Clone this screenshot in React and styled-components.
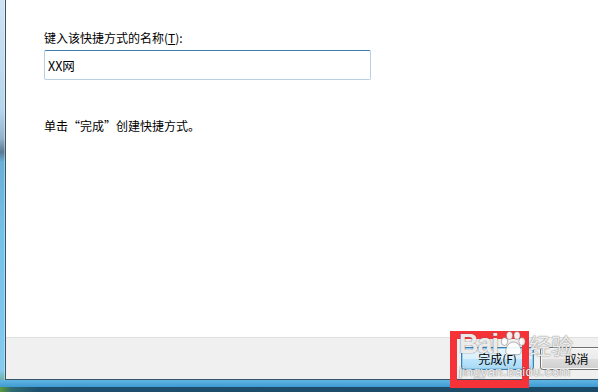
import React from 'react';
import styled, { createGlobalStyle } from 'styled-components';

const Global = createGlobalStyle`
  html, body {
    margin: 0;
    padding: 0;
    background: #fff;
  }
  body {
    font-family: "Noto Sans CJK SC", "Noto Sans", sans-serif;
    font-size: 12px;
    color: #000;
  }
`;

const Screen = styled.div`
  position: relative;
  width: 598px;
  height: 392px;
  overflow: hidden;
  display: flex;
  flex-direction: column;
`;

const Body = styled.div`
  display: flex;
  height: 380px;
`;

const SideFrame = styled.div`
  width: 5px;
  flex-shrink: 0;
  background: linear-gradient(
    to bottom,
    #cfe3f3 0,
    #b7d5ec 110px,
    #93b3cd 138px,
    #5d7893 152px,
    #6aafd8 162px,
    #74c2ea 240px,
    #7ec7ee 330px,
    #86cbef 370px,
    #6fb0a8 380px
  );
  box-shadow: inset -1px 0 0 rgba(255, 255, 255, 0.35);
`;

const Panel = styled.div`
  flex: 1;
  display: flex;
  flex-direction: column;
  border-left: 1px solid #3a5467;
  border-bottom: 1px solid #3a5467;
`;

const Content = styled.div`
  flex: 1;
  background: #fff;
  padding: 30px 0 0 38px;
`;

const Label = styled.div`
  line-height: 16px;
  margin-bottom: 4px;
  white-space: nowrap;

  u {
    text-decoration: underline;
  }
`;

const NameInput = styled.div`
  box-sizing: border-box;
  width: 327px;
  height: 30px;
  border: 1px solid #b6d0e6;
  border-top-color: #3d7db0;
  border-radius: 2px;
  padding: 0 3px;
  display: flex;
  align-items: center;
  font-size: 12.5px;
`;

const Hint = styled.div`
  margin-top: 38px;
  line-height: 16px;
  white-space: nowrap;
`;

const Footer = styled.div`
  height: 41px;
  background: #f0f0f0;
  border-top: 1px solid #dfdfdf;
  display: flex;
  align-items: center;
  padding-left: 455px;
  gap: 6px;
`;

const Button = styled.div`
  box-sizing: border-box;
  flex-shrink: 0;
  width: 73px;
  height: 23px;
  border-radius: 3px;
  display: flex;
  align-items: center;
  justify-content: center;
  font-size: 12px;
  border: 1px solid ${p => (p.$primary ? '#3c7fb1' : '#707070')};
  background: ${p =>
    p.$primary
      ? 'linear-gradient(to bottom, #eaf6fd 0, #d9f0fc 50%, #bee6fd 51%, #a7d9f5 100%)'
      : 'linear-gradient(to bottom, #f2f2f2 0, #ebebeb 50%, #dddddd 51%, #cfcfcf 100%)'};
  box-shadow: inset 0 0 0 1px ${p => (p.$primary ? '#8ed1f5' : '#fcfcfc')};
`;

const BottomFrame = styled.div`
  height: 7px;
  background: linear-gradient(to bottom, #62b4e2, #3e9bd3);
`;

const Desktop = styled.div`
  flex: 1;
  background: linear-gradient(to right, #5d9a3a 0, #2d6a73 12px, #1e4f6e 40px, #1b4a66 100%);
`;

const Highlight = styled.div`
  position: absolute;
  left: 450px;
  top: 331px;
  width: 79px;
  height: 57px;
  box-sizing: border-box;
  border: 7px solid #f53238;
  border-top-width: 8px;
  border-bottom-width: 8px;
`;

const Watermark = styled.div`
  position: absolute;
  left: 459px;
  top: 330px;
  width: 124px;
  color: rgba(255, 255, 255, 0.9);
  text-shadow: 0 0 1px rgba(70, 70, 70, 0.8), 0 0 2px rgba(120, 120, 120, 0.4);
  font-family: "Liberation Sans", Arial, sans-serif;
  pointer-events: none;
`;

const MarkTop = styled.div`
  display: flex;
  align-items: center;
  height: 28px;
  white-space: nowrap;
`;

const MarkWord = styled.span`
  font-size: 27px;
  font-weight: bold;
  letter-spacing: -1px;
`;

const MarkCn = styled.span`
  font-family: "Noto Sans CJK SC", sans-serif;
  font-size: 22px;
  margin-left: 1px;
`;

const MarkUrl = styled.div`
  font-size: 13px;
  line-height: 14px;
  margin-top: 7px;
  white-space: nowrap;
  letter-spacing: 0.4px;
`;

const Paw = () => (
  <svg width="28" height="26" viewBox="0 0 28 26" style={{ margin: '0 1px' }}>
    <g fill="rgba(255,255,255,0.9)" stroke="rgba(70,70,70,0.5)" strokeWidth="0.8">
      <ellipse cx="5.5" cy="10.5" rx="3.2" ry="4" />
      <ellipse cx="10.5" cy="4.5" rx="3.2" ry="4" />
      <ellipse cx="18" cy="4.5" rx="3.2" ry="4" />
      <ellipse cx="23" cy="10.5" rx="3.2" ry="4" />
      <path d="M14.5 11 C9 11 6 18 7 21.5 C8 24.5 12 23.5 14.5 23.5 C17 23.5 21 24.5 22 21.5 C23 18 20 11 14.5 11 Z" />
    </g>
  </svg>
);

export default function App() {
  return (
    <>
      <Global />
      <Screen>
        <Body>
          <SideFrame />
          <Panel>
            <Content>
              <Label>
                键入该快捷方式的名称(<u>T</u>):
              </Label>
              <NameInput>XX网</NameInput>
              <Hint>单击“完成”创建快捷方式。</Hint>
            </Content>
            <Footer>
              <Button $primary>完成(F)</Button>
              <Button>取消</Button>
            </Footer>
          </Panel>
        </Body>
        <BottomFrame />
        <Desktop />
        <Highlight />
        <Watermark>
          <MarkTop>
            <MarkWord>Bai</MarkWord>
            <Paw />
            <MarkCn>经验</MarkCn>
          </MarkTop>
          <MarkUrl>jingyan.baidu.com</MarkUrl>
        </Watermark>
      </Screen>
    </>
  );
}
